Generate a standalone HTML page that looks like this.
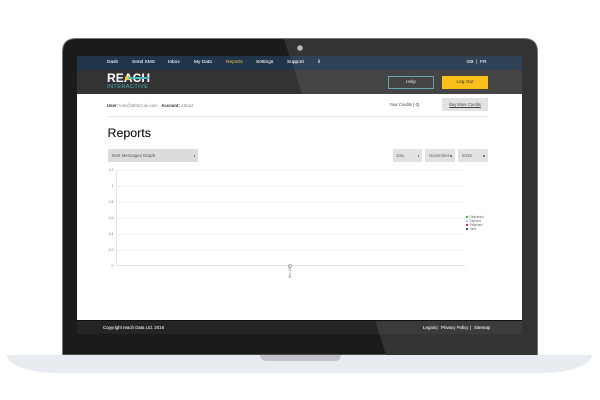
<!DOCTYPE html>
<html><head><meta charset="utf-8">
<style>
html,body{margin:0;padding:0;background:#fff}
#p{position:relative;width:600px;height:400px;overflow:hidden;background:#fff;font-family:"Liberation Sans",sans-serif}
#p div,#p span{position:absolute;white-space:nowrap}
.n{top:60px;font-size:4.800px;line-height:6px;color:#eef1f3;text-shadow:0 0 .2px rgba(238,241,243,.6)}
.s{background:#e2e2e2;height:13px;top:149px;border-radius:1px;font-size:4.400px;line-height:14px;color:#666;text-indent:4px}
.s:after{content:"";position:absolute;right:3px;top:6px;width:1.500px;height:1.500px;background:#777}
.y{left:0;font-size:3.500px;line-height:4px;color:#777;width:113.500px;text-align:right}
.g{left:117px;width:348px;height:1px;background:#f5f5f5}
.l{left:465.500px;width:2.500px;height:2.500px}
.t{left:469.500px;font-size:3.300px;line-height:4px;color:#666}
.f{top:325px;font-size:4.400px;line-height:6px;color:#e8e8e8;text-shadow:0 0 .2px rgba(232,232,232,.6)}
</style></head><body><div id="p">
<div style="left:7px;top:355px;width:585px;height:18px;background:#e8ebf0;border-radius:0 0 50px 50px/0 0 18px 18px"></div>
<div style="left:260px;top:355px;width:81px;height:6px;background:#c2c3c8;border-radius:0 0 6px 6px"></div>
<svg style="position:absolute;left:62px;top:38px" width="476" height="317" viewBox="0 0 476 317">
<path d="M14 .5H462Q475.500 .5 475.500 14V317H.5V14Q.5 .5 14 .5Z" fill="#1b1b1b" stroke="#777" stroke-width="1"/>
<path d="M222 1H462Q475 1 475 14V317H324Z" fill="#333"/>
<circle cx="238" cy="10" r="2.800" fill="#b9b9b9"/>
</svg>

<svg style="position:absolute;left:77px;top:56px" width="445" height="278" viewBox="0 0 445 278">
<rect width="445" height="14" fill="#20344a"/>
<path d="M213 0H445V14H217.500Z" fill="#2f4256"/>
<rect y="14" width="445" height="24" fill="#333"/>
<path d="M217.500 14H445V38H225Z" fill="#444"/>
<rect y="38" width="445" height="226" fill="#fff"/>
<rect y="264" width="445" height="14" fill="#252525"/>
<path d="M298 264H445V278H302.500Z" fill="#3b3b3b"/>
<rect y="264" width="445" height="1" fill="#111"/>
</svg>

<div class="n" style="left:107px">Dash</div>
<div class="n" style="left:132px">Send SMS</div>
<div class="n" style="left:168px">Inbox</div>
<div class="n" style="left:194px">My Data</div>
<div class="n" style="left:226px;color:#d9a62c">Reports</div>
<div class="n" style="left:256px">Settings</div>
<div class="n" style="left:287px">Support</div>
<div class="n" style="left:318px">‖</div>
<div class="n" style="left:466.500px">GB &nbsp;|&nbsp; FR</div>

<div style="left:107px;top:72px;font-size:12px;line-height:13px;font-weight:bold;color:#fff;letter-spacing:.1px">REACH</div>
<div style="left:127px;top:77px;width:22px;height:1.500px;background:#49b8c0"></div>
<div style="left:125px;top:76px;width:4px;height:4px;border-radius:50%;background:#f4c92f"></div>
<div style="left:107px;top:84px;font-size:5.600px;line-height:7px;color:#45b5bd;letter-spacing:.4px">INTERACTIVE</div>

<div style="left:388px;top:76px;width:44px;height:11px;border:1px solid #67a4ad;background:#444;font-size:4.800px;line-height:12px;color:#dfe8e8;text-align:center">Help</div>
<div style="left:442px;top:76px;width:46px;height:13px;background:#fbbf1c;font-size:4.800px;line-height:13px;color:#333;text-align:center">Log Out</div>

<div style="left:107px;top:103px;font-size:4.300px;line-height:6px;color:#888"><b style="color:#333">User:</b> tom@attract.uk.com &nbsp; <b style="color:#333">Account:</b> Attract</div>
<div style="left:389.500px;top:102px;font-size:4.100px;line-height:6px;color:#444">Your Credits (-3)</div>
<div style="left:442px;top:98px;width:46px;height:13px;background:#e2e2e2;font-size:4.100px;line-height:13px;color:#444;text-align:center;text-decoration:underline">Buy More Credits</div>
<div style="left:107px;top:115.500px;width:381px;height:1.500px;background:#e8e8e8"></div>

<div style="left:107.500px;top:125px;font-size:12.400px;line-height:16px;color:#1a1a1a;text-shadow:0 0 .3px currentColor">Reports</div>

<div class="s" style="left:107.500px;width:90.500px;background:#dcdcdc;color:#555">Sent Messages Graph</div>
<div class="s" style="left:392.500px;width:29.500px">Day</div>
<div class="s" style="left:425px;width:29.500px">November</div>
<div class="s" style="left:458px;width:29.500px">2016</div>

<div class="g" style="top:170px"></div>
<div class="g" style="top:186px"></div>
<div class="g" style="top:202px"></div>
<div class="g" style="top:218px"></div>
<div class="g" style="top:234px"></div>
<div class="g" style="top:250px"></div>
<div style="left:116px;top:265px;width:349px;height:1px;background:#e2e2e2"></div>
<div style="left:116px;top:170px;width:1px;height:96px;background:#e6e6e6"></div>
<div class="y" style="top:168px">1.2</div>
<div class="y" style="top:184px">1</div>
<div class="y" style="top:200px">0.8</div>
<div class="y" style="top:216px">0.6</div>
<div class="y" style="top:232px">0.4</div>
<div class="y" style="top:248px">0.2</div>
<div class="y" style="top:264px">0</div>
<div style="left:287.500px;top:264px;width:2px;height:2px;border:.5px solid #aaa;border-radius:50%;background:#eee"></div>
<div style="left:283.500px;top:271px;font-size:3.400px;line-height:4px;color:#777;width:12px;text-align:center;transform:rotate(-90deg)">Oct-16</div>

<div class="l" style="top:215.500px;background:#37c04a"></div><div class="t" style="top:214.500px">Delivered</div>
<div class="l" style="top:219.500px;background:#a9d2ee"></div><div class="t" style="top:218.500px">Expired</div>
<div class="l" style="top:223.500px;background:#e0303f"></div><div class="t" style="top:222.500px">Rejected</div>
<div class="l" style="top:227.500px;background:#444"></div><div class="t" style="top:226.500px">Sent</div>

<div class="f" style="left:103px">Copyright reach Data Ltd. 2016</div>
<div class="f" style="left:423px">Legals</div>
<div class="f" style="left:436.500px">|</div>
<div class="f" style="left:441px">Privacy Policy</div>
<div class="f" style="left:470px">|</div>
<div class="f" style="left:474px">Sitemap</div>
</div></body></html>
